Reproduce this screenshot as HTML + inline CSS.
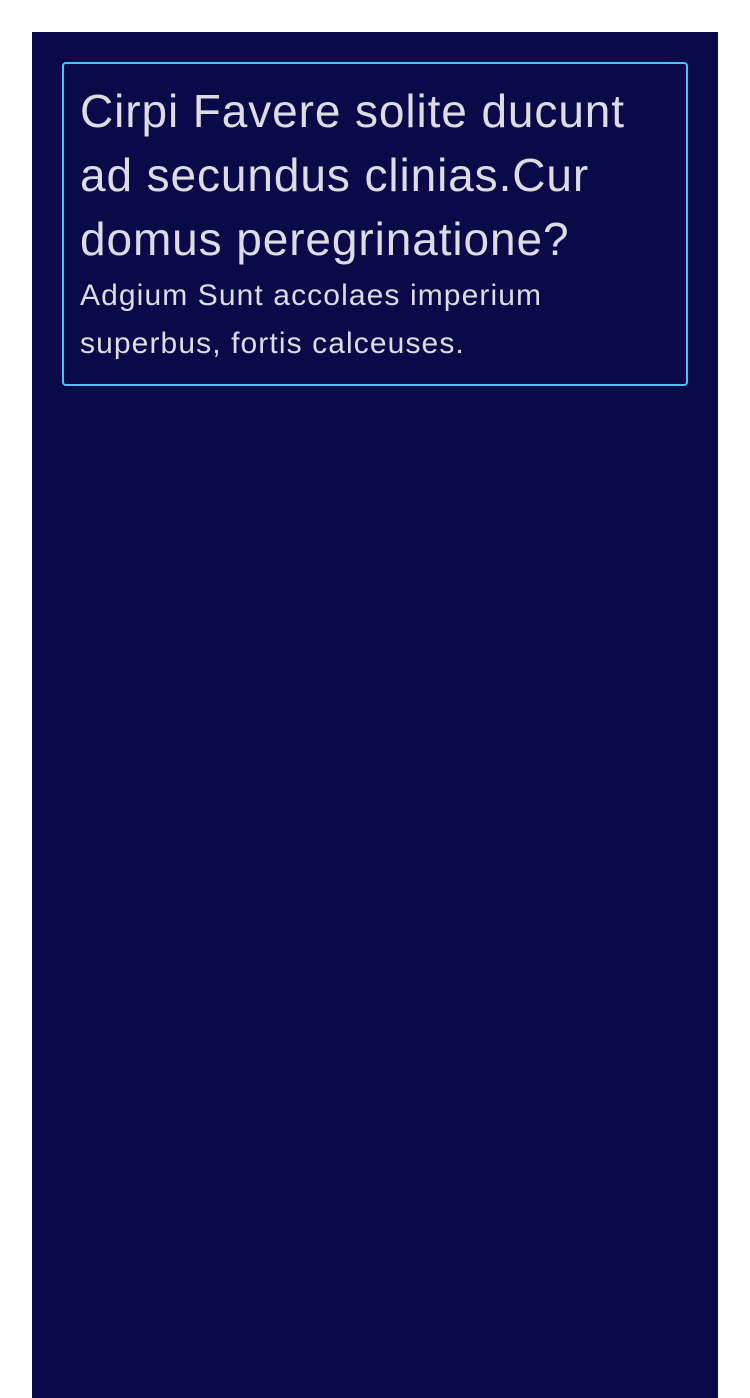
<!DOCTYPE html>
<html><head><style>
body{margin:0;background:#fff;width:750px;height:1398px;overflow:hidden}
.panel{position:absolute;left:32px;top:32px;width:686px;height:1366px;background:#0a0a48}
.card{position:absolute;left:30px;top:30px;width:590px;height:320px;border:2px solid #4fc3f7;border-radius:4px;padding:0 16px;white-space:nowrap}
h1{margin:15px 0 0;font:400 46px/64px "Liberation Sans",sans-serif;color:#dcdce4;letter-spacing:0.9px}
p{margin:1px 0 0;font:400 30px/48px "Liberation Sans",sans-serif;color:#dcdce4;letter-spacing:1.1px}
</style></head><body>
<div class="panel"><div class="card">
<h1>Cirpi Favere solite ducunt<br>ad secundus clinias.Cur<br>domus peregrinatione?</h1>
<p>Adgium Sunt accolaes imperium<br>superbus, fortis calceuses.</p>
</div></div>
</body></html>
